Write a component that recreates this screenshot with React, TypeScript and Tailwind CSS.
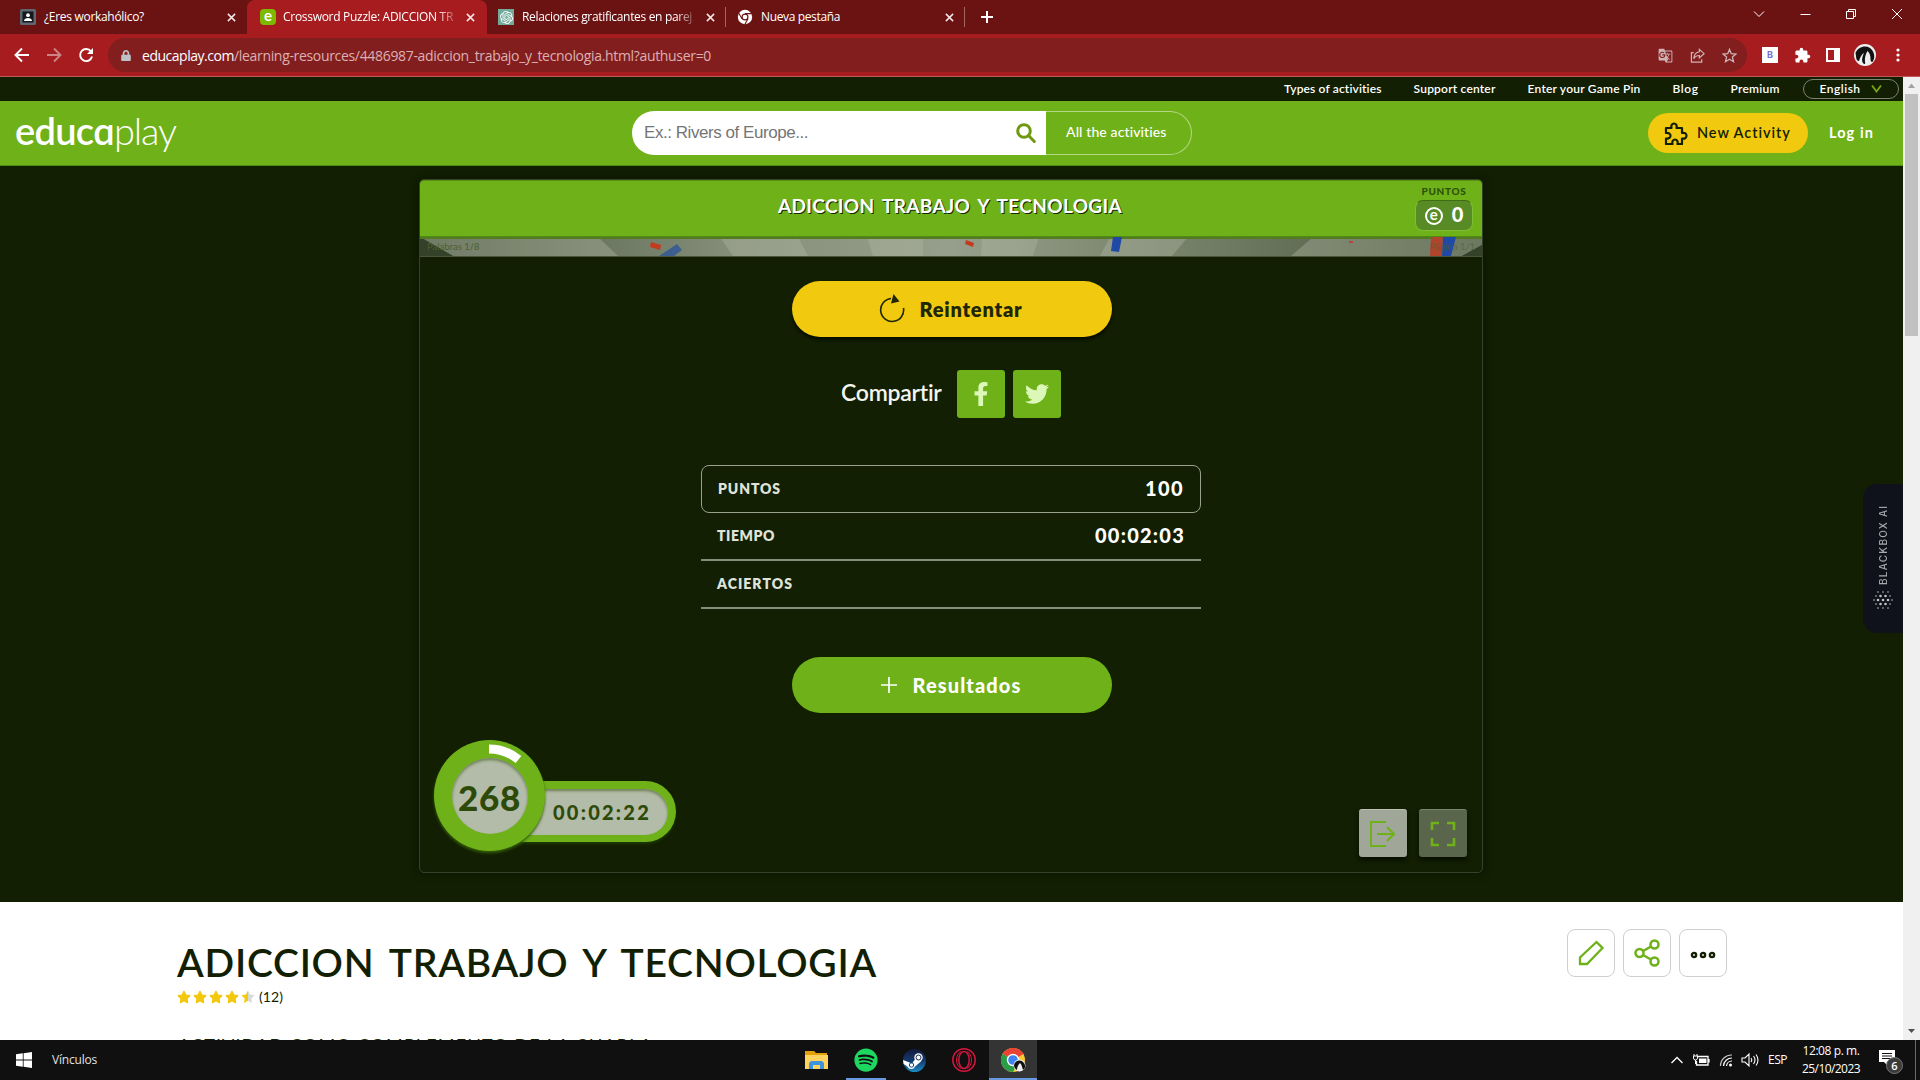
import React, { useLayoutEffect, useRef, useState } from "react";
import { FaFacebookF, FaTwitter, FaSpotify, FaLock, FaStar } from "react-icons/fa";
import { MdExtension, MdGTranslate } from "react-icons/md";
import { SiOpenai } from "react-icons/si";

/* Single line of text whose tracking is adjusted so that it spans `w` pixels. */
function Fit({ w, className = "", children }: { w: number; className?: string; children: string }) {
  const ref = useRef<HTMLSpanElement>(null);
  const [ls, setLs] = useState(0);
  useLayoutEffect(() => {
    if (ref.current) {
      const natural = ref.current.getBoundingClientRect().width;
      setLs((w - natural) / children.length);
    }
  }, []);
  return (
    <span ref={ref} className={"inline-block shrink-0 whitespace-pre " + className} style={{ letterSpacing: ls }}>
      {children}
    </span>
  );
}

const ui = "font-['Open_Sans',sans-serif]";
const nun = "font-['Lato',sans-serif]";

function Cross({ className = "" }: { className?: string }) {
  return (
    <svg viewBox="0 0 10 10" className={"h-[9px] w-[9px] shrink-0 " + className} stroke="#f3e6e6" strokeWidth="1.7" fill="none">
      <path d="M1 1l8 8M9 1l-8 8" />
    </svg>
  );
}

function ChromeMono() {
  return (
    <svg viewBox="0 0 16 16" className="h-4 w-4 shrink-0">
      <circle cx="8" cy="8" r="7.2" fill="#fff" />
      <circle cx="8" cy="8" r="3.5" fill="#6b1212" />
      <circle cx="8" cy="8" r="2.3" fill="#fff" />
      <path d="M8 4.6h6.6M5 9.8L1.8 4.2M11 9.8L7.8 15.4" stroke="#6b1212" strokeWidth="1.1" />
    </svg>
  );
}

function TabStrip() {
  return (
    <div className={"flex h-[34px] items-center bg-[#6b1212] text-[12px] text-white " + ui}>
      <div className="flex h-full w-[247px] items-center pl-5">
        <svg viewBox="0 0 16 16" className="h-4 w-4 shrink-0">
          <rect width="16" height="16" rx="1.5" fill="#5f6770" />
          <rect x="2.5" y="2.5" width="11" height="11" fill="#15181c" />
          <circle cx="8" cy="6.2" r="1.9" fill="#fff" />
          <path d="M4 12c0-4 8-4 8 0z" fill="#fff" />
        </svg>
        <Fit w={100} className="ml-2">¿Eres workahólico?</Fit>
        <Cross className="ml-[83px]" />
      </div>
      <div className="flex h-full w-[240px] items-center rounded-t-lg bg-[#a71d1f] pl-[13px]">
        <div className="flex h-4 w-4 shrink-0 items-center justify-center rounded-[4px] bg-[#7cb900]">
          <span className="-mt-[3px] text-[15px] font-bold leading-none font-['Lato',sans-serif]">e</span>
        </div>
        <div className="ml-[7px] w-[171px] overflow-hidden [mask-image:linear-gradient(to_right,#000_90%,rgba(0,0,0,.25))]">
          <Fit w={170}>Crossword Puzzle: ADICCION TR</Fit>
        </div>
        <Cross className="ml-[12px]" />
      </div>
      <div className="flex h-full w-[238px] items-center pl-[11px]">
        <span className="flex h-4 w-4 shrink-0 items-center justify-center bg-[#74aa9c]">
          <SiOpenai className="h-[13px] w-[13px]" />
        </span>
        <div className="ml-2 w-[171px] overflow-hidden [mask-image:linear-gradient(to_right,#000_90%,rgba(0,0,0,.25))]">
          <Fit w={170}>Relaciones gratificantes en parej</Fit>
        </div>
        <Cross className="ml-[13px]" />
      </div>
      <div className="h-[20px] w-px bg-[#a36464]" />
      <div className="flex h-full w-[238px] items-center pl-[11px]">
        <ChromeMono />
        <Fit w={79} className="ml-2">Nueva pestaña</Fit>
        <Cross className="ml-[105px]" />
      </div>
      <div className="h-[20px] w-px bg-[#a36464]" />
      <svg viewBox="0 0 12 12" className="ml-4 h-3 w-3" stroke="#fff" strokeWidth="2">
        <path d="M6 0v12M0 6h12" />
      </svg>
      <svg viewBox="0 0 150 12" className="-mt-[6px] mr-[17px] ml-auto h-3 w-[150px]" stroke="#fff" fill="none" strokeWidth="1">
        <path d="M1 3.500l5 5 5-5M47.500 6.500h10M93.500 3.500h7v7h-7zM95.500 3.500v-2h7v7h-2M139 1l10 10M149 1l-10 10" />
      </svg>
    </div>
  );
}

function Toolbar() {
  return (
    <div className="flex h-[43px] items-center border-b border-[#c0585a] bg-[#a71d1f]">
      <svg viewBox="0 0 80 16" className="ml-[14px] h-4 w-[80px] shrink-0" fill="none" stroke="#fff" strokeWidth="1.9">
        <path d="M15 8H2M8 1.500L1.500 8 8 14.500" />
        <path d="M33 8h13M40 1.500L46.500 8 40 14.500" stroke="#cc8485" />
        <path d="M77 4.500A6 6 0 1 0 78 9.500" />
        <path d="M79 1v6h-6z" fill="#fff" stroke="none" />
      </svg>
      <div className="ml-[14px] flex h-[34px] w-[1639px] items-center rounded-full bg-[#831e1f]">
        <FaLock className="ml-[13px] h-[11px] w-[10px] text-[#bdc1c6]" />
        <div className={"ml-[11px] text-[14px] text-[#dcb0b1] " + ui}>
          <Fit w={92} className="text-white">educaplay.com</Fit>
          <Fit w={477}>/learning-resources/4486987-adiccion_trabajo_y_tecnologia.html?authuser=0</Fit>
        </div>
        <div className="mr-[10px] ml-auto flex items-center gap-[17px] text-[#cdb3b3]">
          <MdGTranslate className="h-[15px] w-[15px]" />
          <svg viewBox="0 0 16 16" className="h-[15px] w-[15px]" fill="none" stroke="currentColor" strokeWidth="1.3">
            <path d="M4 5H1.500v10h11v-3M10 1.500L15 6l-5 4.500V8C7 8 5.200 9 4 11.500 4.300 7 6.500 4.500 10 4z" />
          </svg>
          <svg viewBox="0 0 16 16" className="h-[15px] w-[15px]" fill="none" stroke="currentColor" strokeWidth="1.4">
            <path d="M8 1.500l1.900 4.600 5 .4-3.800 3.200 1.200 4.900L8 12l-4.300 2.600 1.200-4.900L1.100 6.500l5-.4z" />
          </svg>
        </div>
      </div>
      <div className="ml-[15px] flex h-4 w-4 items-center justify-center bg-white text-[9px] font-bold text-[#6f6fd6] font-['Inter',sans-serif]">B</div>
      <MdExtension className="ml-[16px] h-[17px] w-[17px] text-white" />
      <svg viewBox="0 0 14 14" className="ml-[15px] h-[14px] w-[14px]">
        <path d="M0 0h14v14H0zM2 2v10h6V2z" fill="#fff" fillRule="evenodd" />
      </svg>
      <svg viewBox="0 0 22 22" className="ml-[14px] h-[22px] w-[22px]">
        <circle cx="11" cy="11" r="11" fill="#eee" />
        <path d="M1.500 9C4 3 11 1 16 4c4 3 6 9 2.500 14-1.500 0-2-1-2-3 0-4-1-6-3-8-2 3-3 7-2.500 11 .5 1.500 0 2-1 2-3-2-2-7 0-11-2 1-4 4-5 8-2 0-3-2-3-5z" fill="#111" />
      </svg>
      <svg viewBox="0 0 4 16" className="ml-[20px] h-4 w-1" fill="#fff">
        <circle cx="2" cy="3" r="1.600" /><circle cx="2" cy="8" r="1.600" /><circle cx="2" cy="13" r="1.600" />
      </svg>
    </div>
  );
}

function TopNav() {
  return (
    <div className={"flex h-6 items-center bg-[#121f02] text-[12px] font-semibold leading-none text-white " + nun}>
      <div className="-mt-px ml-[1284px] flex items-center">
        <Fit w={98}>Types of activities</Fit>
        <Fit w={82} className="ml-8">Support center</Fit>
        <Fit w={113} className="ml-8">Enter your Game Pin</Fit>
        <Fit w={26} className="ml-8">Blog</Fit>
        <Fit w={49} className="ml-[32px]">Premium</Fit>
      </div>
      <div className="ml-[23px] flex h-5 w-[96px] items-center rounded-full border border-[#7b8472] pl-4">
        <Fit w={41} className="-mt-px">English</Fit>
        <svg viewBox="0 0 11 8" className="ml-[10px] h-2 w-[11px]" fill="none" stroke="#79a50f" strokeWidth="1.800">
          <path d="M1 .5l4.500 6L10 .5" />
        </svg>
      </div>
    </div>
  );
}

function Header() {
  return (
    <div className={"flex h-[65px] items-center border-b border-[#4f8a17] bg-[#6fb118] text-white " + nun}>
      <div className="-mt-[7px] ml-[15px] flex h-[50px] w-[162px] items-center text-[38px] leading-none">
        <Fit w={99} className="font-semibold">educɑ</Fit>
        <Fit w={62} className="font-light">play</Fit>
      </div>
      <div className="ml-[455px] flex h-11 w-[414px] items-center rounded-l-full bg-white pl-[12px]">
        <Fit w={164} className="text-[17px] text-[#757575] font-['Liberation_Sans',sans-serif]">Ex.: Rivers of Europe...</Fit>
        <svg viewBox="0 0 20 20" className="ml-[208px] h-5 w-5" fill="none" stroke="#6f9a10" strokeWidth="3">
          <circle cx="8" cy="8" r="6.300" /><path d="M12.500 12.500l5.800 6" strokeLinecap="round" />
        </svg>
      </div>
      <div className="flex h-11 w-[146px] items-center rounded-r-full border border-l-0 border-[#b3d784] pl-5">
        <Fit w={101} className="-mt-[3px] text-[14px] font-medium">All the activities</Fit>
      </div>
      <div className="ml-[456px] flex h-10 w-[160px] items-center rounded-full bg-[#f1c90f] pl-4 text-[#121f02]">
        <svg viewBox="0 0 24 24" className="h-[24px] w-[24px]" fill="none" stroke="currentColor" strokeWidth="2.200" strokeLinejoin="round">
          <path d="M2 7h5.500C6 1 14 1 12.500 7H18v5c6-1.500 6 7 0 5.500V23h-4.500c1.500-6-6.500-6-5 0H2v-5.500c6 1 6-6.500 0-5.500z" />
        </svg>
        <Fit w={94} className="-mt-px ml-[9px] text-[14.5px] font-semibold text-[#121f02]">New Activity</Fit>
      </div>
      <Fit w={45} className="-mt-px ml-[21px] text-[14.5px] font-bold">Log in</Fit>
    </div>
  );
}

function Strip() {
  return (
    <div className="h-[20px] w-full border-b border-[#4a553c]">
      <svg viewBox="0 0 1062 19" className="h-[19px] w-full" preserveAspectRatio="none">
        <defs>
          <linearGradient id="sg" x1="0" x2="1">
            <stop offset="0" stopColor="#4b5940" /><stop offset=".3" stopColor="#858f7a" /><stop offset=".5" stopColor="#969f8b" /><stop offset=".75" stopColor="#707c63" /><stop offset="1" stopColor="#46543a" />
          </linearGradient>
        </defs>
        <rect width="1062" height="19" fill="url(#sg)" />
        <g fill="#b5bba8" opacity=".36">
          <path d="M0 0h178l20 19H33z" /><path d="M300 0h78l10 19h-75z" /><path d="M447 0h56v19h-50z" /><path d="M562 0h57l-6 19h-52zM690 0h78l-16 19h-72zM893 0h169v8l-20 11H871z" />
        </g>
        <path d="M0 0l33 19H0zM1062 8v11h-20z" fill="#34422a" />
        <path d="M0 0h1062v2H0z" fill="#527b22" />
        <path d="M231 5l10 3-1 5-10-3z" fill="#c33b1f" />
        <path d="M239 19l18-12 5 6-8 6z" fill="#3d5f8f" />
        <path d="M546 3l8 3-1 4-8-3z" fill="#c33b1f" />
        <path d="M693 0h9l-3 15-8-1z" fill="#2049a5" />
        <path d="M929 4h4v2h-4z" fill="#b54a31" />
        <path d="M1011 0h12l-1 19h-12z" fill="#b0452b" />
        <path d="M1023 0h13l-5 19h-9z" fill="#2049a5" />
        <text x="7" y="13" fontSize="9.500" fontFamily="Lato" fill="#4b5f34">Palabras 1/8</text>
        <text x="1010" y="13" fontSize="9.500" fontFamily="Lato" fill="#4b5f34" opacity=".6">Página 1/1</text>
      </svg>
    </div>
  );
}

function Score({ label, value, w, vw, cls }: { label: string; value?: string; w: number; vw?: number; cls: string }) {
  return (
    <div className={"flex h-12 w-full items-center justify-between pb-[2px] " + cls}>
      <Fit w={w} className="text-[14px] font-extrabold text-[#dfe3d9]">{label}</Fit>
      {value && <Fit w={vw!} className="text-[20px] font-black text-white">{value}</Fit>}
    </div>
  );
}

function Timer() {
  return (
    <div className="relative h-[111px] w-[242px]">
      <div className="absolute top-[41px] left-[56px] h-[61px] w-[186px] rounded-r-full bg-[#6fb118] shadow-[0_2px_3px_#1d3a05]">
        <div className="mt-2 flex h-[46px] w-[178px] items-center rounded-r-full bg-[#b3bca8] pl-[63px] text-[20px] font-black text-[#2d4a08] shadow-[inset_0_2px_3px_#6d8055]">
          <Fit w={98}>00:02:22</Fit>
        </div>
      </div>
      <div className="absolute top-0 left-0 flex h-[111px] w-[111px] items-center justify-center rounded-full bg-[#6fb118] shadow-[0_2px_3px_#35600b]">
        <div className="flex h-[76px] w-[76px] items-center justify-center rounded-full bg-[#b3bca8] text-[35px] leading-none font-black text-[#2d4a08] shadow-[inset_0_2px_3px_#6d8055]">
          <span className="mt-[3px]"><Fit w={63}>268</Fit></span>
        </div>
      </div>
      <svg viewBox="0 0 111 111" className="absolute top-0 left-0 h-[111px] w-[111px]" fill="none" stroke="#fff" strokeWidth="9">
        <path d="M55 9A47 47 0 0 1 84.500 19.500" />
      </svg>
    </div>
  );
}

function Game() {
  return (
    <div className="flex h-[736px] bg-[#121f02] pl-[419px] pt-[13px]">
      <div className={"flex h-[694px] w-[1064px] flex-col items-center rounded-[5px] border border-[#35432a] shadow-[0_0_8px_#0b1401] " + nun}>
        <div className="flex h-[57px] w-full rounded-t-[4px] border-t border-b border-t-[#599010] border-b-[#4f8a17] bg-[#6fb118] text-white">
          <Fit w={344} className="mt-[11px] ml-[358px] text-[19px] font-bold [text-shadow:1px_1px_0_#16280a] [word-spacing:3px]">ADICCION TRABAJO Y TECNOLOGIA</Fit>
          <div className="ml-[293px] flex w-[58px] flex-col items-center">
            <Fit w={45} className="mt-[4px] text-[10px] leading-[13px] font-black text-[#2c5208]">PUNTOS</Fit>
            <div className="mt-[2px] flex h-[31px] w-[58px] items-center justify-center gap-[9px] rounded-[8px] border border-t-[#3f6d16] border-[#7fbd34] bg-[#588a26]">
              <span className="flex h-[18px] w-[18px] items-center justify-center rounded-full border-2 border-white text-[15px] leading-none font-bold"><span className="-mt-[3px]">e</span></span>
              <span className="-mt-[3px] text-[20px] font-black leading-none">0</span>
            </div>
          </div>
        </div>
        <Strip />
        <div className="mt-[24px] ml-px flex h-14 w-[320px] items-center rounded-full bg-[#f1c90f] text-[#1f2604] shadow-[0_3px_3px_#070d01]">
          <svg viewBox="0 0 26 30" className="-mt-[2px] ml-[87px] h-[30px] w-[26px]" fill="none" stroke="#1f2604" strokeWidth="1.600">
            <path d="M12 5.500A11.500 11.500 0 1 0 24.500 15" /><path d="M14.500 1l6 7.500-8.500 2z" fill="#1f2604" stroke="none" />
          </svg>
          <Fit w={103} className="-mt-px ml-[15px] text-[20px] font-extrabold">Reintentar</Fit>
        </div>
        <div className="mt-8 flex h-[49px] items-center self-start pl-[421px]">
          <Fit w={101} className="-mt-[3px] text-[23px] font-semibold text-[#f3f5ef]">Compartir</Fit>
          <span className="ml-[15px] flex h-12 w-12 items-center justify-center rounded-[3px] bg-[#6fb118] text-[#dcf8b9]"><FaFacebookF className="h-6 w-6" /></span>
          <span className="ml-[8px] flex h-12 w-12 items-center justify-center rounded-[3px] bg-[#6fb118] text-[#dcf8b9]"><FaTwitter className="h-6 w-6" /></span>
        </div>
        <div className="mt-[47px] flex w-[500px] flex-col">
          <Score label="PUNTOS" w={63} value="100" vw={39} cls="rounded-[8px] border border-[#97a18b] px-4" />
          <Score label="TIEMPO" w={58} value="00:02:03" vw={90} cls="border-b-2 border-[#84907a] pl-[16px] pr-4" />
          <Score label="ACIERTOS" w={76} cls="border-b-2 border-[#84907a] pl-[16px]" />
        </div>
        <div className="mt-[48px] ml-px flex h-14 w-[320px] items-center rounded-full bg-[#6fb118] text-white">
          <svg viewBox="0 0 16 16" className="ml-[89px] h-4 w-4" stroke="#fff" strokeWidth="1.700"><path d="M8 0v16M0 8h16" /></svg>
          <Fit w={109} className="-mt-px ml-[16px] text-[20px] font-black">Resultados</Fit>
        </div>
        <div className="mt-[27px] flex w-full items-start pl-[14px]">
          <Timer />
          <div className="mt-[69px] ml-[683px] flex h-12 w-12 items-center justify-center rounded-[3px] border-t border-[#bcc0b6] bg-[#a0a698] shadow-[0_3px_4px_#070d01]">
            <svg viewBox="0 0 26 26" className="h-[26px] w-[26px]" fill="none" stroke="#6fb118" strokeWidth="2">
              <path d="M16 1H1v24h15M7 13h17M17 6l7 7-7 7" />
            </svg>
          </div>
          <div className="mt-[69px] ml-[12px] flex h-12 w-12 items-center justify-center rounded-[3px] border-t border-[#7c8770] bg-[#59664b] shadow-[0_3px_4px_#070d01]">
            <svg viewBox="0 0 26 26" className="h-[26px] w-[26px]" fill="none" stroke="#6fb118" strokeWidth="2.600">
              <path d="M2 9V2h7M17 2h7v7M24 17v7h-7M9 24H2v-7" />
            </svg>
          </div>
        </div>
      </div>
      <div className="mt-[305px] ml-[380px] flex h-[149px] w-[40px] flex-col items-center rounded-l-[14px] bg-[#10121b] pt-[21px]">
        <div className="flex h-[80px] w-4 rotate-180 items-center justify-center text-[10px] leading-none font-medium text-[#a7a8ad] [writing-mode:vertical-rl] font-['Inter',sans-serif]">
          <span className="tracking-[1.25px] whitespace-nowrap">BLACKBOX AI</span>
        </div>
        <svg viewBox="0 0 20 20" className="mt-[5px] h-5 w-5" fill="#c2c3c6">
          {[[5, 2], [10, 2], [15, 2], [3, 6], [7.500, 6], [12.500, 6], [17, 6], [1, 10], [5, 10], [10, 10], [15, 10], [19, 10], [3, 14], [7.500, 14], [12.500, 14], [17, 14], [5, 18], [10, 18], [15, 18]].map(([x, y], i) => (
            <circle key={i} cx={x} cy={y} r={Math.abs(x - 10) < 6 && Math.abs(y - 10) < 5 ? 1.3 : 0.8} />
          ))}
        </svg>
      </div>
    </div>
  );
}

function Info() {
  const btn = "flex h-12 w-12 items-center justify-center rounded-[8px] border border-[#cfcfcf]";
  return (
    <div className={"flex h-[138px] overflow-hidden bg-white text-[#121f02] " + nun}>
      <div className="ml-[177px] w-[1390px]">
        <h1 className="mt-[36px] h-[49px] text-[39px] leading-[49px] font-semibold"><Fit w={700} className="[word-spacing:5px]">ADICCION TRABAJO Y TECNOLOGIA</Fit></h1>
        <div className="mt-[2px] flex h-4 items-center gap-[2px] text-[#f1c90f]">
          <FaStar className="h-[14px] w-[14px]" /><FaStar className="h-[14px] w-[14px]" /><FaStar className="h-[14px] w-[14px]" /><FaStar className="h-[14px] w-[14px]" />
          <svg viewBox="0 0 14 14" className="h-[14px] w-[14px]">
            <path d="M7 .5v10.300L3 13l.7-4.500L.4 5.300l4.600-.7z" fill="#f1c90f" /><path d="M7 .5v10.300L11 13l-.7-4.500 3.300-3.200-4.600-.7z" fill="#d9d9d9" />
          </svg>
          <Fit w={24} className="-mt-[2px] ml-[2px] text-[14px] text-[#121f02]">(12)</Fit>
        </div>
        <div className="mt-[28px] ml-[1px] text-[18px] leading-[24px]"><Fit w={475}>ACTIVIDAD COMO COMPLEMENTO DE LA CHARLA</Fit></div>
      </div>
      <div className="mt-[27px] flex gap-2">
        <div className={btn}>
          <svg viewBox="0 0 26 26" className="h-[26px] w-[26px]" fill="none" stroke="#6fb118" strokeWidth="2.300"><path d="M2 24v-6.500L18.500 2l6 6L9 24z" /></svg>
        </div>
        <div className={btn}>
          <svg viewBox="0 0 26 28" className="h-[28px] w-[26px]" fill="none" stroke="#6fb118" strokeWidth="2.500"><circle cx="5.500" cy="14" r="4" /><circle cx="20.500" cy="5.500" r="4" /><circle cx="20.500" cy="22.500" r="4" /><path d="M9 12l8-4.500M9 16l8 4.500" /></svg>
        </div>
        <div className={btn}>
          <svg viewBox="0 0 26 8" className="mt-[3px] h-2 w-[26px]" fill="none" stroke="#121f02" strokeWidth="2.400"><circle cx="4" cy="4" r="2.100" /><circle cx="13" cy="4" r="2.100" /><circle cx="22" cy="4" r="2.100" /></svg>
        </div>
      </div>
    </div>
  );
}

function ScrollBar() {
  return (
    <div className="flex h-[963px] w-[17px] flex-col items-center bg-[#f0f0f0]">
      <svg viewBox="0 0 17 17" className="h-[17px] w-[17px]" fill="#a3a3a3"><path d="M5 11l3.500-4.500L12 11z" /></svg>
      <div className="h-[242px] w-[13px] bg-[#c1c1c1]" />
      <svg viewBox="0 0 17 17" className="mt-auto h-[17px] w-[17px]" fill="#505050"><path d="M5 6l3.500 4L12 6z" /></svg>
    </div>
  );
}

function Taskbar() {
  return (
    <div className={"flex h-10 items-center bg-[#101010] text-white " + ui}>
      <svg viewBox="0 0 16 16" className="ml-4 h-4 w-4" fill="#fff"><path d="M0 2.200L6.800 1.300V7.600H0zM7.600 1.200L16 0v7.600H7.600zM0 8.400h6.800v6.400L0 13.800zM7.600 8.400H16V16l-8.400-1.200z" /></svg>
      <Fit w={45} className="ml-5 text-[12px] text-[#e0e0e0]">Vínculos</Fit>
      <svg viewBox="0 0 23 18" className="ml-[708px] h-[18px] w-[23px]">
        <path d="M0 0h9l2 2h11v16H0z" fill="#e3a008" /><path d="M0 4h23v14H0z" fill="#ffd35e" /><path d="M4 18v-6l2-2h11l2 2v6h-4v-4H8v4z" fill="#3d93dd" />
      </svg>
      <div className="ml-[18px] flex h-10 w-[40px] items-center justify-center border-b-2 border-[#6699e0] pt-[1px]"><FaSpotify className="h-6 w-6 text-[#1ed760]" /></div>
      <div className="ml-[17px] flex h-[23px] w-[23px] items-center justify-center rounded-full bg-gradient-to-b from-[#111a3c] via-[#133a6d] to-[#1b8cc4]">
        <svg viewBox="0 0 23 23" className="h-[23px] w-[23px]"><path d="M0 11l9 3.500 5-7 4 5-6 5a4 4 0 0 1-7.500 0L.6 15z" fill="#fff" /><circle cx="15.500" cy="8.500" r="4.200" fill="#fff" /><circle cx="15.500" cy="8.500" r="2.500" fill="none" stroke="#14284f" /><circle cx="8.500" cy="16" r="2.200" fill="none" stroke="#14497c" /></svg>
      </div>
      <svg viewBox="0 0 24 24" className="ml-[26px] h-6 w-6" fill="none" stroke="#d3173f" strokeWidth="1.500"><circle cx="12" cy="12" r="11.200" /><ellipse cx="12" cy="12" rx="5.200" ry="8.600" /><path d="M9 3.500c-6 3-6 14 0 17M15 3.500c6 3 6 14 0 17" strokeWidth="1" /></svg>
      <div className="ml-[13px] flex h-10 w-12 items-center justify-center border-b-2 border-[#6699e0] bg-[#343434]">
        <svg viewBox="0 0 26 24" className="mt-px ml-[2px] h-6 w-[26px]">
          <circle cx="12" cy="12" r="12" fill="#fcc934" />
          <path d="M12 12L1.600 6A12 12 0 0 1 22.400 6z" fill="#ea4335" />
          <path d="M12 12L1.600 6A12 12 0 0 0 12 24l5-9z" fill="#2a9d48" />
          <circle cx="12" cy="12" r="6.200" fill="#fff" /><circle cx="12" cy="12" r="4.800" fill="#3f82f0" />
          <circle cx="18.500" cy="17.500" r="6" fill="#eee" /><path d="M13 17c1-5 7-6 10-2 2 3 1 6-1 7-1-3-1-5-3-7-2 2-3 4-3 7-2-1-3-3-3-5z" fill="#111" />
        </svg>
      </div>
      <svg viewBox="0 0 88 20" className="ml-[634px] h-5 w-[88px]" fill="none" stroke="#fff" strokeWidth="1.300">
        <path d="M.5 13L6 7.500 11.500 13" />
        <path d="M26.500 6.500H37v8.500H25.500v-4M38 9v3.500" /><path d="M28 8.500h7.500V13H28z" fill="#fff" stroke="none" /><path d="M23 4v2M26 4v2M22.500 6h4v2a2 2 0 0 1-4 0zM24.500 10v4" strokeWidth="1" />
        <g strokeWidth="1.200"><path d="M49.500 16A11 11 0 0 1 61 5" opacity=".75" /><path d="M52.500 16A8.500 8.500 0 0 1 61 8" /><path d="M55.500 16A5.500 5.500 0 0 1 61 11" /></g><circle cx="59.500" cy="15" r="1.500" fill="#fff" stroke="none" />
        <path d="M71 8h3l4-4v12l-4-4h-3zM80 8q1.500 2 0 4M82.500 6q3 4 0 8M85 4.500q4 5.500 0 11" strokeWidth="1.100" />
      </svg>
      <Fit w={19} className="ml-[9px] text-[12px]">ESP</Fit>
      <div className="ml-[14px] flex w-[60px] flex-col items-center text-[12px] leading-[18px]">
        <Fit w={57}>12:08 p. m.</Fit>
        <Fit w={58}>25/10/2023</Fit>
      </div>
      <svg viewBox="0 0 26 26" className="mt-[2px] ml-[18px] h-[26px] w-[26px]">
        <path d="M0 2h16v12H8l0 3-3-3H0z" fill="#fff" /><path d="M3 5.500h10M3 8h10M3 10.500h8" stroke="#101010" />
        <circle cx="15.500" cy="17.500" r="8" fill="#3b3b3b" stroke="#777" /><text x="15.500" y="21.500" textAnchor="middle" fontSize="11" fontFamily="Open Sans" fontWeight="600" fill="#fff">6</text>
      </svg>
      <div className="mr-1 ml-auto h-10 w-px bg-[#6a6a6a]" />
    </div>
  );
}

export default function App() {
  return (
    <div className="h-[1080px] w-[1920px] overflow-hidden bg-white">
      <TabStrip />
      <Toolbar />
      <div className="flex h-[963px]">
        <div className="w-[1903px]">
          <TopNav />
          <Header />
          <Game />
          <Info />
        </div>
        <ScrollBar />
      </div>
      <Taskbar />
    </div>
  );
}
